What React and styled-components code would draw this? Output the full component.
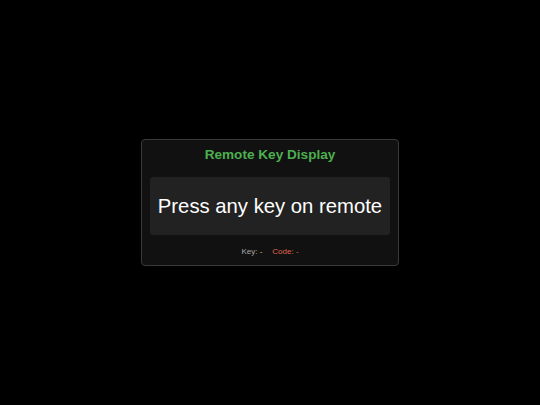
import React from "react";
import styled, { createGlobalStyle } from "styled-components";

const GlobalStyle = createGlobalStyle`
  html, body {
    margin: 0;
    padding: 0;
    background: #000;
    font-family: "Liberation Sans", Arial, sans-serif;
  }
`;

const Screen = styled.div`
  width: 540px;
  height: 405px;
  display: flex;
  align-items: center;
  justify-content: center;
  background: #000;
`;

const Card = styled.div`
  width: 240px;
  padding: 7px 8px 7px;
  background: #111;
  border: 1px solid #3a3a3a;
  border-radius: 4px;
  display: flex;
  flex-direction: column;
  align-items: stretch;
`;

const Title = styled.h1`
  margin: 0 0 14px;
  height: 16px;
  line-height: 16px;
  text-align: center;
  font-size: 13.6px;
  font-weight: bold;
  color: #4caf50;
`;

const KeyBox = styled.div`
  height: 58px;
  display: flex;
  align-items: center;
  justify-content: center;
  background: #222;
  border-radius: 3px;
  color: #fff;
  font-size: 20.3px;
`;

const Footer = styled.div`
  margin-top: 11px;
  display: flex;
  justify-content: center;
  gap: 10px;
  font-size: 8px;
  line-height: 12px;
`;

const Field = styled.span`
  color: ${(p) => p.$color};
`;

const Value = styled.span`
  color: ${(p) => p.$color};
`;

export default function App() {
  return (
    <>
      <GlobalStyle />
      <Screen>
        <Card>
          <Title>Remote Key Display</Title>
          <KeyBox>Press any key on remote</KeyBox>
          <Footer>
            <Field $color="#aaa">
              Key: <Value $color="#f0c040">-</Value>
            </Field>
            <Field $color="#e0644a">
              Code: <Value $color="#e0644a">-</Value>
            </Field>
          </Footer>
        </Card>
      </Screen>
    </>
  );
}
